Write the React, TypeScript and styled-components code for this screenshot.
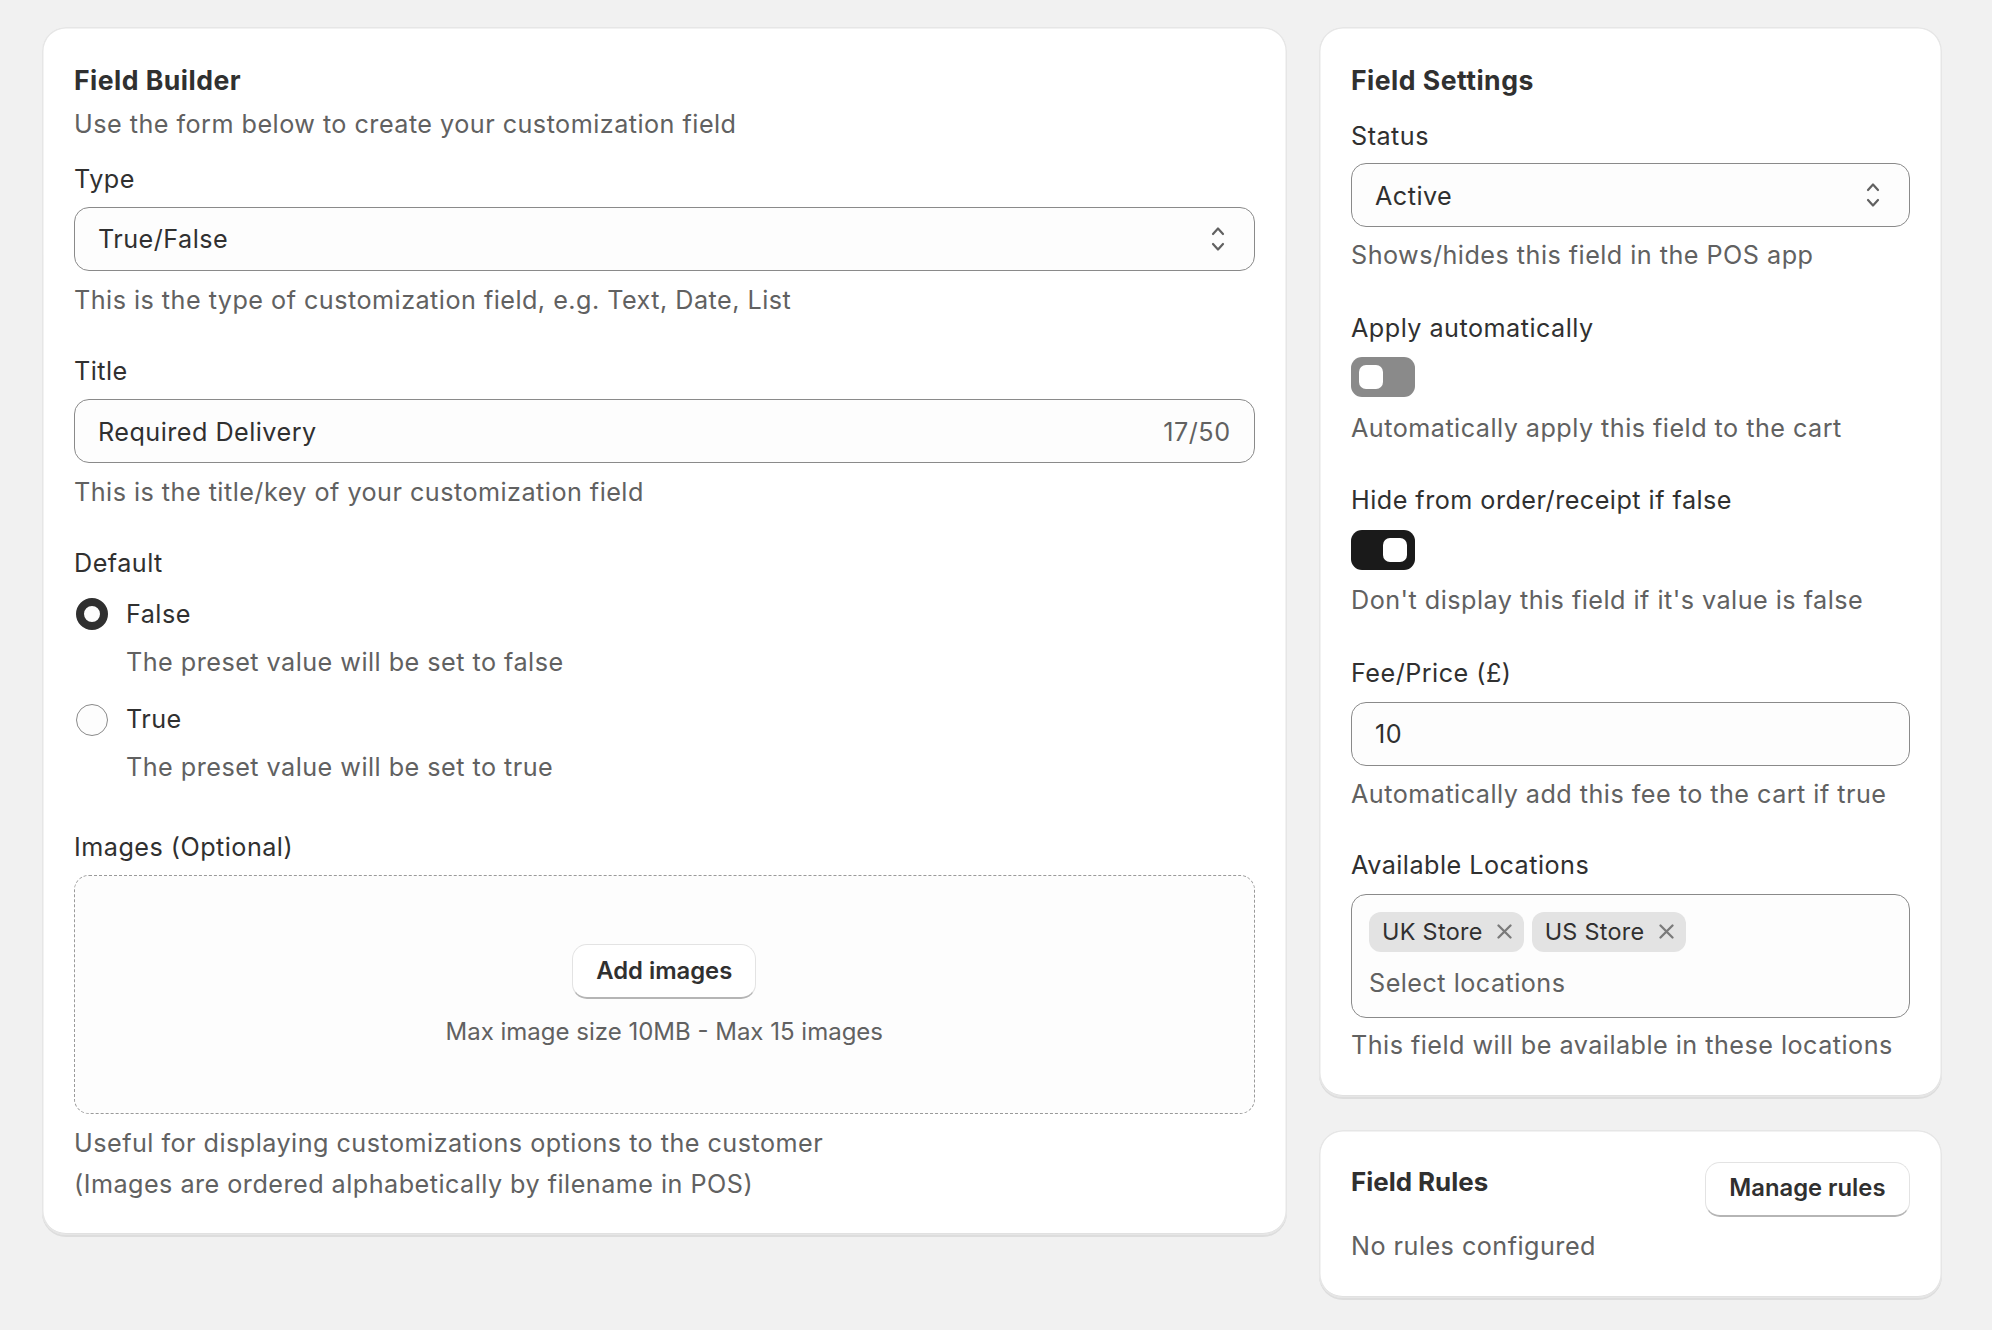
import React from 'react';
import styled, { createGlobalStyle } from 'styled-components';

const GlobalStyle = createGlobalStyle`
	html, body {
		margin: 0;
		background: #f1f1f1;
	}
	body {
		font-family: Inter, 'Noto Sans', sans-serif;
		font-size: 25.2px;
		font-weight: 420;
		letter-spacing: 0.47px;
		line-height: 40.6px;
		color: #303030;
	}
	* {
		box-sizing: border-box;
	}
`;

const Page = styled.div`
	display: flex;
	align-items: flex-start;
	gap: 32px;
	width: 1992px;
	height: 1330px;
	padding: 27px 50px 0 42px;
	overflow: hidden;
`;

const Column = styled.div<{ $width: number }>`
	display: flex;
	flex-direction: column;
	gap: 33px;
	width: ${(p) => p.$width}px;
`;

const Card = styled.section`
	padding: 33px 32.5px 31px 32px;
	background: #fff;
	border-radius: 24px;
	box-shadow: 0 2px 0 rgba(26, 26, 26, 0.09), inset 0 0 0 1.5px #e6e6e6, inset 0 -2px 0 #dcdcdc;
`;

const RulesCard = styled(Card)`
	padding-top: 32px;
	padding-bottom: 32px;
`;

const Heading = styled.h2`
	margin: 0;
	font-size: 26.6px;
	font-weight: 650;
	line-height: 40.6px;
	color: #303030;
`;

const Sub = styled.p`
	margin: 3px 0 0;
	color: #616161;
`;

const Field = styled.div<{ $top?: number }>`
	margin-top: ${(p) => p.$top ?? 31}px;
`;

const Label = styled.div<{ $bottom?: number }>`
	margin-bottom: ${(p) => p.$bottom ?? 7}px;
`;

const Help = styled.p<{ $top?: number }>`
	margin: ${(p) => p.$top ?? 9}px 0 0;
	color: #616161;
`;

const Control = styled.div`
	display: flex;
	align-items: center;
	justify-content: space-between;
	height: 64px;
	padding: 0 23px;
	background: #fdfdfd;
	border: 1.3px solid #8a8a8a;
	border-radius: 15px;
`;

const Value = styled.span`
	padding-top: 2px;
`;

const Muted = styled(Value)`
	color: #616161;
`;

const Option = styled.div<{ $top: number }>`
	display: grid;
	grid-template-columns: 32px 1fr;
	column-gap: 18px;
	align-items: center;
	margin: ${(p) => p.$top}px 0 0 2px;
`;

const Radio = styled.span<{ $checked?: boolean }>`
	width: 32px;
	height: 32px;
	border-radius: 50%;
	background: #fdfdfd;
	border: ${(p) => (p.$checked ? '8.5px solid #303030' : '1.3px solid #8a8a8a')};
`;

const OptionHelp = styled.p`
	grid-column: 2;
	margin: 7px 0 0;
	color: #616161;
`;

const DropZone = styled.div`
	display: flex;
	flex-direction: column;
	align-items: center;
	height: 239px;
	padding-top: 68px;
	background: #fdfdfd;
	border: 1.3px dashed #9a9a9a;
	border-radius: 15px;
`;

const Button = styled.button`
	height: 55px;
	padding: 0 23px;
	background: #fff;
	color: #303030;
	font: inherit;
	font-size: 23.8px;
	font-weight: 560;
	letter-spacing: 0;
	border: 1.5px solid #e3e3e3;
	border-bottom: 2px solid #b5b5b5;
	border-radius: 15px;
`;

const DropHint = styled.span`
	margin-top: 13px;
	font-size: 24px;
	letter-spacing: 0;
	color: #616161;
`;

const Toggle = styled.div<{ $on?: boolean }>`
	display: flex;
	justify-content: ${(p) => (p.$on ? 'flex-end' : 'flex-start')};
	width: 64px;
	height: 40px;
	padding: 8px;
	background: ${(p) => (p.$on ? '#1a1a1a' : '#8a8a8a')};
	border-radius: 11px;
`;

const Knob = styled.span`
	width: 24px;
	height: 24px;
	background: #fff;
	border-radius: 7px;
`;

const TagBox = styled.div`
	height: 124px;
	padding: 17px;
	background: #fdfdfd;
	border: 1.3px solid #8a8a8a;
	border-radius: 15px;
`;

const TagRow = styled.div`
	display: flex;
	gap: 8px;
`;

const Tag = styled.span`
	display: flex;
	align-items: center;
	gap: 14px;
	height: 40px;
	padding: 0 12px 0 13px;
	background: #e3e3e3;
	border-radius: 12px;
	font-size: 23.4px;
	letter-spacing: 0.3px;
`;

const Placeholder = styled.div`
	margin-top: 11px;
	color: #616161;
`;

const RulesHeader = styled.div`
	display: flex;
	align-items: flex-start;
	justify-content: space-between;
`;

const RulesTitle = styled(Heading)`
	font-size: 25.9px;
	letter-spacing: 0;
`;

const ChevronIcon = styled.svg`
	margin-right: 5px;
`;

const Chevrons = () => (
	<ChevronIcon width='16' height='26' viewBox='0 0 16 26' fill='none' stroke='#616161' strokeWidth='2.2' strokeLinecap='round' strokeLinejoin='round'>
		<path d='M3 8l5-5.5L13 8' />
		<path d='M3 18l5 5.5 5-5.5' />
	</ChevronIcon>
);

const Close = () => (
	<svg width='15' height='15' viewBox='0 0 15 15' fill='none' stroke='#7a7a7a' strokeWidth='2.3' strokeLinecap='round'>
		<path d='M1.5 1.5l12 12M13.5 1.5l-12 12' />
	</svg>
);

const App = () => (
	<>
		<GlobalStyle />
		<Page>
			<Column $width={1245}>
				<Card>
					<Heading>Field Builder</Heading>
					<Sub>Use the form below to create your customization field</Sub>
					<Field $top={15}>
						<Label>Type</Label>
						<Control>
							<Value>True/False</Value>
							<Chevrons />
						</Control>
						<Help>This is the type of customization field, e.g. Text, Date, List</Help>
					</Field>
					<Field>
						<Label>Title</Label>
						<Control>
							<Value>Required Delivery</Value>
							<Muted>17/50</Muted>
						</Control>
						<Help>This is the title/key of your customization field</Help>
					</Field>
					<Field $top={30}>
						<div>Default</div>
						<Option $top={11}>
							<Radio $checked />
							<span>False</span>
							<OptionHelp>The preset value will be set to false</OptionHelp>
						</Option>
						<Option $top={17}>
							<Radio />
							<span>True</span>
							<OptionHelp>The preset value will be set to true</OptionHelp>
						</Option>
					</Field>
					<Field $top={39}>
						<Label $bottom={8}>Images (Optional)</Label>
						<DropZone>
							<Button>Add images</Button>
							<DropHint>Max image size 10MB - Max 15 images</DropHint>
						</DropZone>
						<Help>
							Useful for displaying customizations options to the customer
							<br />
							(Images are ordered alphabetically by filename in POS)
						</Help>
					</Field>
				</Card>
			</Column>
			<Column $width={623}>
				<Card>
					<Heading>Field Settings</Heading>
					<Field $top={15}>
						<Label>Status</Label>
						<Control>
							<Value>Active</Value>
							<Chevrons />
						</Control>
						<Help $top={8}>Shows/hides this field in the POS app</Help>
					</Field>
					<Field $top={32}>
						<Label $bottom={9}>Apply automatically</Label>
						<Toggle>
							<Knob />
						</Toggle>
						<Help $top={11}>Automatically apply this field to the cart</Help>
					</Field>
					<Field>
						<Label $bottom={9}>Hide from order/receipt if false</Label>
						<Toggle $on>
							<Knob />
						</Toggle>
						<Help $top={10}>Don't display this field if it's value is false</Help>
					</Field>
					<Field $top={33}>
						<Label $bottom={8}>Fee/Price (£)</Label>
						<Control>
							<Value>10</Value>
						</Control>
						<Help $top={8}>Automatically add this fee to the cart if true</Help>
					</Field>
					<Field>
						<Label $bottom={8}>Available Locations</Label>
						<TagBox>
							<TagRow>
								<Tag>
									UK Store
									<Close />
								</Tag>
								<Tag>
									US Store
									<Close />
								</Tag>
							</TagRow>
							<Placeholder>Select locations</Placeholder>
						</TagBox>
						<Help $top={7}>This field will be available in these locations</Help>
					</Field>
				</Card>
				<RulesCard>
					<RulesHeader>
						<RulesTitle>Field Rules</RulesTitle>
						<Button>Manage rules</Button>
					</RulesHeader>
					<Help>No rules configured</Help>
				</RulesCard>
			</Column>
		</Page>
	</>
);

export default App;
